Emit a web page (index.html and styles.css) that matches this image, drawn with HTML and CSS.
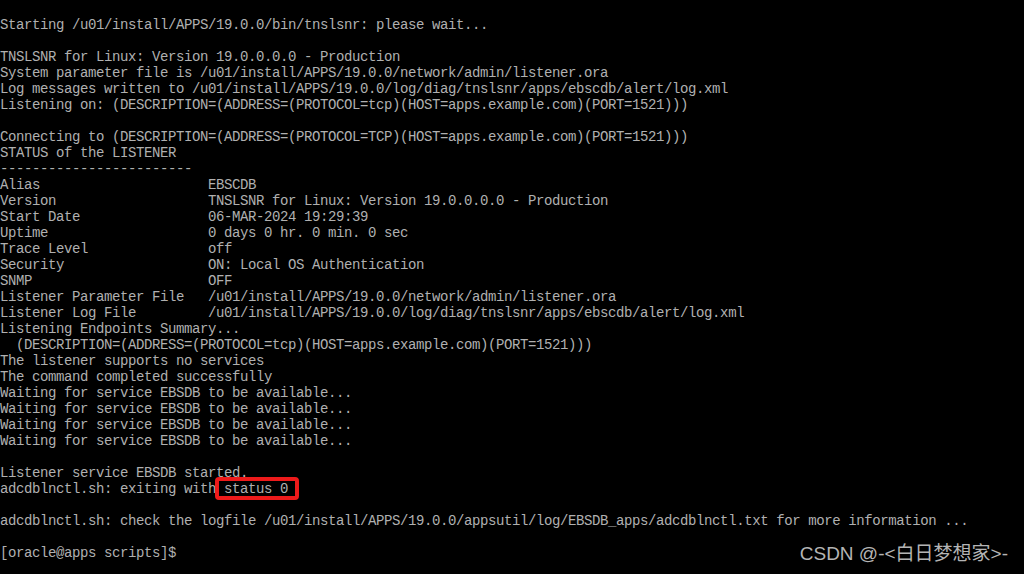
FILE: index.html
```html
<!DOCTYPE html>
<html lang="en">
<head>
<meta charset="utf-8">
<title>Terminal</title>
<link rel="stylesheet" href="styles.css">
</head>
<body>
<main class="screen">
<pre class="console">Starting /u01/install/APPS/19.0.0/bin/tnslsnr: please wait...

TNSLSNR for Linux: Version 19.0.0.0.0 - Production
System parameter file is /u01/install/APPS/19.0.0/network/admin/listener.ora
Log messages written to /u01/install/APPS/19.0.0/log/diag/tnslsnr/apps/ebscdb/alert/log.xml
Listening on: (DESCRIPTION=(ADDRESS=(PROTOCOL=tcp)(HOST=apps.example.com)(PORT=1521)))

Connecting to (DESCRIPTION=(ADDRESS=(PROTOCOL=TCP)(HOST=apps.example.com)(PORT=1521)))
STATUS of the LISTENER
------------------------
Alias                     EBSCDB
Version                   TNSLSNR for Linux: Version 19.0.0.0.0 - Production
Start Date                06-MAR-2024 19:29:39
Uptime                    0 days 0 hr. 0 min. 0 sec
Trace Level               off
Security                  ON: Local OS Authentication
SNMP                      OFF
Listener Parameter File   /u01/install/APPS/19.0.0/network/admin/listener.ora
Listener Log File         /u01/install/APPS/19.0.0/log/diag/tnslsnr/apps/ebscdb/alert/log.xml
Listening Endpoints Summary...
  (DESCRIPTION=(ADDRESS=(PROTOCOL=tcp)(HOST=apps.example.com)(PORT=1521)))
The listener supports no services
The command completed successfully
Waiting for service EBSDB to be available...
Waiting for service EBSDB to be available...
Waiting for service EBSDB to be available...
Waiting for service EBSDB to be available...

Listener service EBSDB started.
adcdblnctl.sh: exiting with <span class="mark">status 0</span>

adcdblnctl.sh: check the logfile /u01/install/APPS/19.0.0/appsutil/log/EBSDB_apps/adcdblnctl.txt for more information ...

[oracle@apps scripts]$</pre>
<div class="watermark">CSDN @-&lt;白日梦想家&gt;-</div>
</main>
</body>
</html>
```

FILE: styles.css
```css
html, body {
  margin: 0;
  padding: 0;
  background: #000;
}

.screen {
  position: relative;
  width: 1024px;
  height: 574px;
  overflow: hidden;
  background: #000;
}

.console {
  margin: 0;
  padding: 17px 0 0 0;
  font-family: "Liberation Mono", "DejaVu Sans Mono", monospace;
  font-size: 14px;
  letter-spacing: -0.4px;
  line-height: 16px;
  color: #b0b0b0;
  white-space: pre;
}

.mark {
  position: relative;
  display: inline-block;
  height: 16px;
  line-height: 16px;
}

.mark::after {
  content: "";
  position: absolute;
  left: -9px;
  right: -11px;
  top: -4px;
  bottom: -3px;
  border: 4px solid #ee1a1a;
  border-radius: 4px;
}

.watermark {
  position: absolute;
  right: 16px;
  bottom: 9px;
  font-family: "Liberation Sans", "Noto Sans CJK SC", sans-serif;
  font-size: 19px;
  line-height: 22px;
  color: #b4b4b4;
  text-shadow: 0 0 1px #000;
}
```
